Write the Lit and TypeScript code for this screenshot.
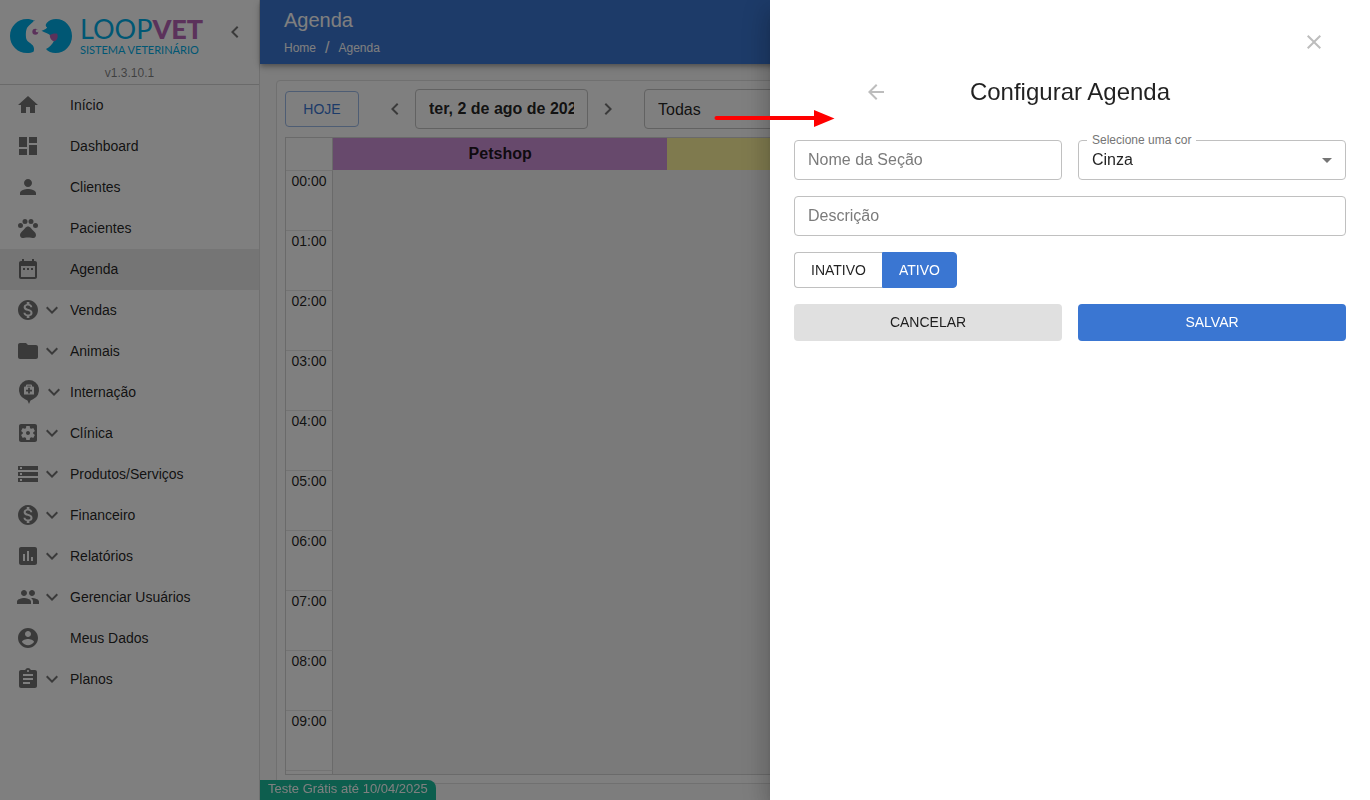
import { LitElement, html, svg, css } from "lit";
import { customElement, property, state } from "lit/decorators.js";
import { classMap } from "lit/directives/class-map.js";

const coin =
  "M12 2C6.48 2 2 6.48 2 12s4.48 10 10 10 10-4.48 10-10S17.52 2 12 2zm1.41 16.09V20h-2.67v-1.93c-1.71-.36-3.16-1.46-3.27-3.4h1.96c.1 1.05.82 1.87 2.65 1.87 1.96 0 2.4-.98 2.4-1.59 0-.83-.44-1.61-2.67-2.14-2.48-.6-4.18-1.62-4.18-3.67 0-1.72 1.39-2.84 3.11-3.21V4h2.67v1.95c1.86.45 2.79 1.86 2.85 3.39H14.3c-.05-1.11-.64-1.87-2.22-1.87-1.5 0-2.4.68-2.4 1.64 0 .84.65 1.39 2.67 1.91s4.18 1.39 4.18 3.91c-.01 1.83-1.38 2.83-3.12 3.16z";

const ICONS: Record<string, string> = {
  home: "M10 20v-6h4v6h5v-8h3L12 3 2 12h3v8z",
  dashboard: "M3 13h8V3H3v10zm0 8h8v-6H3v6zm10 0h8V11h-8v10zm0-18v6h8V3h-8z",
  person:
    "M12 12c2.21 0 4-1.79 4-4s-1.79-4-4-4-4 1.79-4 4 1.79 4 4 4zm0 2c-2.67 0-8 1.34-8 4v2h16v-2c0-2.66-5.33-4-8-4z",
  pets:
    "M2 9.5a2.5 2.5 0 1 0 5 0a2.5 2.5 0 1 0-5 0M6.5 5.5a2.5 2.5 0 1 0 5 0a2.5 2.5 0 1 0-5 0M12.5 5.5a2.5 2.5 0 1 0 5 0a2.5 2.5 0 1 0-5 0M17 9.5a2.5 2.5 0 1 0 5 0a2.5 2.5 0 1 0-5 0M17.34 14.86c-.87-1.02-1.6-1.89-2.48-2.91-.46-.54-1.05-1.08-1.75-1.32-.11-.04-.22-.07-.33-.09-.25-.04-.52-.04-.78-.04s-.53 0-.79.05c-.11.02-.22.05-.33.09-.7.24-1.28.78-1.75 1.32-.87 1.02-1.6 1.89-2.48 2.91-1.31 1.31-2.92 2.76-2.62 4.79.29 1.02 1.02 2.03 2.33 2.32.73.15 3.06-.44 5.54-.44h.18c2.48 0 4.81.58 5.54.44 1.31-.29 2.04-1.31 2.33-2.32.31-2.04-1.3-3.49-2.61-4.8z",
  calendar:
    "M9 11H7v2h2v-2zm4 0h-2v2h2v-2zm4 0h-2v2h2v-2zm2-7h-1V2h-2v2H8V2H6v2H5c-1.11 0-1.99.9-1.99 2L3 20c0 1.1.89 2 2 2h14c1.1 0 2-.9 2-2V6c0-1.1-.9-2-2-2zm0 16H5V9h14v11z",
  coin,
  folder:
    "M10 4H4c-1.1 0-1.99.9-1.99 2L2 18c0 1.1.9 2 2 2h16c1.1 0 2-.9 2-2V8c0-1.1-.9-2-2-2h-8l-2-2z",
  settings:
    "M12 10c-1.1 0-2 .9-2 2s.9 2 2 2 2-.9 2-2-.9-2-2-2zm7-7H5c-1.11 0-2 .9-2 2v14c0 1.1.89 2 2 2h14c1.11 0 2-.9 2-2V5c0-1.1-.89-2-2-2zm-1.75 9c0 .23-.02.46-.05.68l1.48 1.16c.13.11.17.3.08.45l-1.4 2.42c-.09.15-.27.21-.43.15l-1.74-.7c-.36.28-.76.51-1.18.69l-.26 1.85c-.03.17-.18.3-.35.3h-2.8c-.17 0-.32-.13-.35-.29l-.26-1.85c-.43-.18-.82-.41-1.18-.69l-1.74.7c-.16.06-.34 0-.43-.15l-1.4-2.42c-.09-.15-.05-.34.08-.45l1.48-1.16c-.03-.23-.05-.46-.05-.69s.02-.46.05-.68l-1.48-1.16c-.13-.11-.17-.3-.08-.45l1.4-2.42c.09-.15.27-.21.43-.15l1.74.7c.36-.28.76-.51 1.18-.69l.26-1.85c.03-.17.18-.3.35-.3h2.8c.17 0 .32.13.35.29l.26 1.85c.43.18.82.41 1.18.69l1.74-.7c.16-.06.34 0 .43.15l1.4 2.42c.09.15.05.34-.08.45l-1.48 1.16c.03.23.05.46.05.69z",
  storage:
    "M2 20h20v-4H2v4zm2-3h2v2H4v-2zM2 4v4h20V4H2zm4 3H4V5h2v2zm-4 7h20v-4H2v4zm2-3h2v2H4v-2z",
  report:
    "M19 3H5c-1.1 0-2 .9-2 2v14c0 1.1.9 2 2 2h14c1.1 0 2-.9 2-2V5c0-1.1-.9-2-2-2zM9 17H7v-7h2v7zm4 0h-2V7h2v10zm4 0h-2v-4h2v4z",
  people:
    "M16 11c1.66 0 2.99-1.34 2.99-3S17.66 5 16 5c-1.66 0-3 1.34-3 3s1.34 3 3 3zm-8 0c1.66 0 2.99-1.34 2.99-3S9.66 5 8 5C6.34 5 5 6.34 5 8s1.34 3 3 3zm0 2c-2.33 0-7 1.17-7 3.5V19h14v-2.5c0-2.33-4.67-3.5-7-3.5zm8 0c-.29 0-.62.02-.97.05 1.16.84 1.97 1.97 1.97 3.45V19h6v-2.5c0-2.33-4.67-3.5-7-3.5z",
  account:
    "M12 2C6.48 2 2 6.48 2 12s4.48 10 10 10 10-4.48 10-10S17.52 2 12 2zm0 3c1.66 0 3 1.34 3 3s-1.34 3-3 3-3-1.34-3-3 1.34-3 3-3zm0 14.2c-2.5 0-4.71-1.28-6-3.22.03-1.99 4-3.08 6-3.08 1.99 0 5.97 1.09 6 3.08-1.29 1.94-3.5 3.22-6 3.22z",
  clipboard:
    "M19 3h-4.18C14.4 1.84 13.3 1 12 1c-1.3 0-2.4.84-2.82 2H5c-1.1 0-2 .9-2 2v14c0 1.1.9 2 2 2h14c1.1 0 2-.9 2-2V5c0-1.1-.9-2-2-2zm-7 0c.55 0 1 .45 1 1s-.45 1-1 1-1-.45-1-1 .45-1 1-1zm2 14H7v-2h7v2zm3-4H7v-2h10v2zm0-4H7V7h10v2z",
  expand: "M16.59 8.59L12 13.17 7.41 8.59 6 10l6 6 6-6z",
  left: "M15.41 7.41L14 6l-6 6 6 6 1.41-1.41L10.83 12z",
  right: "M10 6L8.59 7.41 13.17 12l-4.58 4.59L10 18l6-6z",
  back: "M20 11H7.83l5.59-5.59L12 4l-8 8 8 8 1.41-1.41L7.83 13H20v-2z",
  close:
    "M19 6.41L17.59 5 12 10.59 6.41 5 5 6.41 10.59 12 5 17.59 6.41 19 12 13.41 17.59 19 19 17.59 13.41 12z",
  dropdown: "M7 10l5 5 5-5z",
};

@customElement("app-icon")
export class AppIcon extends LitElement {
  @property() name = "";

  static styles = css`
    :host {
      display: inline-flex;
      flex: none;
    }
    .glyph {
      display: block;
      width: 24px;
      height: 24px;
      fill: currentColor;
    }
    .glyph.pin {
      width: 26px;
      height: 26px;
    }
  `;

  render() {
    if (this.name === "pin") {
      return html`<svg class="glyph pin" viewBox="0 0 26 26" aria-hidden="true">
        ${svg`<path fill-rule="evenodd" d="M13 1a10 10 0 0 1 4 19.200L14.500 21.500 13 25l-1.500-3.500L9 20.200A10 10 0 0 1 13 1zM11 5.500a1 1 0 0 0-1 1V7.500H9a1 1 0 0 0-1 1v7h10v-7a1 1 0 0 0-1-1h-1V6.500a1 1 0 0 0-1-1zM11.200 7.500v-.8h3.600v.8zM12.100 8.800h1.800v1.900H16v1.800h-2.100v1.900h-1.800v-1.900H10v-1.800h2.100z"/>`}
      </svg>`;
    }
    return html`<svg class="glyph" viewBox="0 0 24 24" aria-hidden="true">
      ${svg`<path d=${ICONS[this.name] ?? ""} />`}
    </svg>`;
  }
}

interface NavItem {
  label: string;
  icon: string;
  group?: boolean;
}

const NAV: NavItem[] = [
  { label: "Início", icon: "home" },
  { label: "Dashboard", icon: "dashboard" },
  { label: "Clientes", icon: "person" },
  { label: "Pacientes", icon: "pets" },
  { label: "Agenda", icon: "calendar" },
  { label: "Vendas", icon: "coin", group: true },
  { label: "Animais", icon: "folder", group: true },
  { label: "Internação", icon: "pin", group: true },
  { label: "Clínica", icon: "settings", group: true },
  { label: "Produtos/Serviços", icon: "storage", group: true },
  { label: "Financeiro", icon: "coin", group: true },
  { label: "Relatórios", icon: "report", group: true },
  { label: "Gerenciar Usuários", icon: "people", group: true },
  { label: "Meus Dados", icon: "account" },
  { label: "Planos", icon: "clipboard", group: true },
];

@customElement("side-nav")
export class SideNav extends LitElement {
  @property() current = "Agenda";

  static styles = css`
    :host {
      display: block;
      box-sizing: border-box;
      background: #fff;
      border-right: 1px solid #e0e0e0;
      overflow: hidden;
    }
    .top {
      display: grid;
      grid-template-columns: 1fr 48px;
      padding: 16px 0 1px;
      border-bottom: 1px solid #d4d4d4;
    }
    .brand {
      display: flex;
      gap: 8px;
      padding-left: 10px;
      height: 47px;
    }
    .mark {
      width: 62px;
      height: 40px;
      flex: none;
    }
    .words {
      display: flex;
      flex-direction: column;
      font-family: Lato, "Liberation Sans", sans-serif;
      color: #00aee8;
      white-space: nowrap;
    }
    .name {
      font-size: 27px;
      line-height: 26px;
      font-weight: 400;
    }
    .strong {
      font-weight: 900;
      color: #b764b6;
    }
    .tag {
      font-size: 11px;
      line-height: 16px;
      font-weight: 400;
    }
    .collapse {
      border: 0;
      background: none;
      padding: 2px 0 0;
      color: rgba(0, 0, 0, 0.54);
      height: 32px;
      justify-self: center;
    }
    .version {
      grid-column: 1 / -1;
      text-align: center;
      font-size: 12px;
      line-height: 20px;
      color: rgba(0, 0, 0, 0.5);
    }
    .list {
      list-style: none;
      margin: 0;
      padding: 0;
    }
    .item {
      display: grid;
      grid-template-columns: 54px 1fr;
      align-items: center;
      box-sizing: border-box;
      height: 41px;
      padding: 0 0 1px 16px;
      font-size: 14px;
      color: rgba(0, 0, 0, 0.87);
      text-decoration: none;
    }
    .item.active {
      background: #ebebeb;
    }
    .icons {
      display: flex;
      align-items: center;
      color: rgba(0, 0, 0, 0.54);
    }
  `;

  render() {
    return html`
      <div class="top">
        <div class="brand">
          <svg class="mark" viewBox="0 0 62 40" aria-hidden="true">
            ${svg`
              <path fill="#00aee8" d="M24.700 5C22 3.500 19.500 3 17 3 7.500 3 0 10.500 0 20s7.500 17 17 17c2.600 0 5-.3 6.500-1.200 1-2 .6-4.500-.8-6.500-2.200-2.600-6.200-3.400-6.700-7.800-.3-3.500-.2-6 .7-8.800 1.500-3.600 5-4.700 8-8.700z"/>
              <path fill="#00aee8" d="M36.700 7C39 4.500 42 3 46 3c9 0 16 7.500 16 17s-7 17-16.500 17c-4 0-7.500-1.500-9.500-4 3.500-2 6.500-4.500 8-8.300L40 19c-1.500-1.600-5.500-2.600-8.500-4.300 2.200-.6 4.200-1.400 5.700-3.200-1.500-1-2.200-2.500-.5-4.500z"/>
              <circle fill="#b764b6" cx="25.300" cy="15.700" r="3"/>
              <circle fill="#fff" cx="27.200" cy="14.800" r="1.500"/>
              <path fill="#b764b6" d="M39.800 19c2-1.200 5-2 7.400-1.300 1 2.500.6 6.300-2.800 7.600-2.600-.3-4.800-3-4.600-6.300z"/>`}
          </svg>
          <div class="words">
            <span class="name">LOOP<span class="strong">VET</span></span>
            <span class="tag">SISTEMA VETERINÁRIO</span>
          </div>
        </div>
        <button class="collapse" aria-label="Recolher menu">
          <app-icon name="left"></app-icon>
        </button>
        <div class="version">v1.3.10.1</div>
      </div>
      <nav>
        <ul class="list">
          ${NAV.map(
            (n) => html`<li>
              <a
                href="#"
                class=${classMap({ item: true, active: n.label === this.current })}
              >
                <span class="icons">
                  <app-icon name=${n.icon}></app-icon>
                  ${n.group ? html`<app-icon name="expand"></app-icon>` : null}
                </span>
                <span>${n.label}</span>
              </a>
            </li>`
          )}
        </ul>
      </nav>
    `;
  }
}

// The last, unlabelled row closes the visible part of the day.
const HOURS = [...Array.from({ length: 10 }, (_, h) => `${String(h).padStart(2, "0")}:00`), ""];

@customElement("agenda-board")
export class AgendaBoard extends LitElement {
  static styles = css`
    :host {
      display: flex;
      flex-direction: column;
      box-sizing: border-box;
      gap: 8px;
      padding: 8px;
      min-height: 0;
      background: #fff;
      border: 1px solid #e0e0e0;
      border-radius: 4px;
      color: rgba(0, 0, 0, 0.87);
    }
    .toolbar {
      display: flex;
      align-items: center;
    }
    button,
    input,
    select {
      font-family: inherit;
      box-sizing: border-box;
    }
    .today {
      width: 74px;
      height: 36px;
      border: 1px solid #9cbae8;
      border-radius: 4px;
      background: none;
      color: #3a76d2;
      font-size: 14px;
    }
    .step {
      border: 0;
      background: none;
      padding: 0;
      width: 24px;
      height: 24px;
      color: rgba(0, 0, 0, 0.54);
    }
    .stepper {
      display: flex;
      align-items: center;
      gap: 8px;
      margin: 0 24px;
    }
    .date {
      width: 173px;
      height: 40px;
      padding: 0 13px;
      border: 1px solid #c4c4c4;
      border-radius: 4px;
      background: none;
      font-size: 16px;
      font-weight: 700;
      color: inherit;
    }
    .filter {
      width: 240px;
      height: 40px;
      padding: 0 13px;
      border: 1px solid #c4c4c4;
      border-radius: 4px;
      background: none;
      appearance: none;
      font-size: 16px;
      color: inherit;
    }
    .viewport {
      flex: 1;
      min-height: 0;
      overflow: hidden;
      padding-right: 8px;
      border: 1px solid #d4d4d4;
    }
    .grid {
      width: 100%;
      table-layout: fixed;
      border-collapse: separate;
      border-spacing: 0;
    }
    .timecol {
      width: 47px;
    }
    .head {
      height: 32px;
      padding: 0;
      font-size: 16px;
      font-weight: 700;
    }
    .corner,
    .hour {
      border-right: 1px solid #d4d4d4;
    }
    .purple {
      background: #ce93d8;
    }
    .yellow {
      background: #fff59d;
    }
    .green {
      background: #a5d6a7;
    }
    .hour {
      height: 60px;
      box-sizing: border-box;
      padding: 1px 0 0;
      border-top: 1px solid #e6e6e6;
      font-size: 14px;
      line-height: 18px;
      font-weight: 400;
      text-align: center;
      vertical-align: top;
    }
    .slot {
      background: #f5f5f5;
      padding: 0;
    }
  `;

  render() {
    return html`
      <div class="toolbar">
        <button class="today">HOJE</button>
        <div class="stepper">
          <button class="step" aria-label="Dia anterior"><app-icon name="left"></app-icon></button>
          <input class="date" aria-label="Data" value="ter, 2 de ago de 2022" />
          <button class="step" aria-label="Próximo dia"><app-icon name="right"></app-icon></button>
        </div>
        <select class="filter" aria-label="Seção">
          <option>Todas</option>
        </select>
      </div>
      <div class="viewport">
        <table class="grid">
          <colgroup>
            <col class="timecol" />
            <col />
            <col />
            <col />
          </colgroup>
          <thead>
            <tr>
              <td class="head corner"></td>
              <th class="head purple" scope="col">Petshop</th>
              <td class="head yellow"></td>
              <td class="head green"></td>
            </tr>
          </thead>
          <tbody>
            ${HOURS.map(
              (h) => html`<tr>
                <th class="hour" scope="row">${h}</th>
                <td class="slot"></td>
                <td class="slot"></td>
                <td class="slot"></td>
              </tr>`
            )}
          </tbody>
        </table>
      </div>
    `;
  }
}

@customElement("section-drawer")
export class SectionDrawer extends LitElement {
  @state() private enabled = true;

  static styles = css`
    :host {
      display: block;
      box-sizing: border-box;
      padding: 24px;
      background: #fff;
      color: rgba(0, 0, 0, 0.87);
      box-shadow: 0 8px 10px -5px rgba(0, 0, 0, 0.2), 0 16px 24px 2px rgba(0, 0, 0, 0.14),
        0 6px 30px 5px rgba(0, 0, 0, 0.12);
    }
    button,
    input,
    select {
      font-family: inherit;
      box-sizing: border-box;
    }
    .bar {
      display: flex;
      justify-content: flex-end;
      padding: 6px 20px 20px 0;
    }
    .tool {
      display: flex;
      border: 0;
      padding: 0;
      background: none;
      color: #bdbdbd;
    }
    .heading {
      display: grid;
      grid-template-columns: 1fr auto 1fr;
      column-gap: 12px;
      align-items: center;
      justify-items: center;
      margin-bottom: 30px;
    }
    .title {
      margin: 0;
      font-size: 24px;
      line-height: 36px;
      font-weight: 400;
    }
    .form {
      display: grid;
      grid-template-columns: 1fr 1fr;
      gap: 16px;
    }
    .field {
      position: relative;
      display: flex;
      align-items: center;
      height: 40px;
    }
    .wide {
      grid-column: 1 / -1;
    }
    .box {
      width: 100%;
      height: 40px;
      padding: 0 13px;
      border: 1px solid #c0c0c0;
      border-radius: 4px;
      background: none;
      appearance: none;
      font-size: 16px;
      color: inherit;
    }
    select.box {
      padding-bottom: 2px;
    }
    .box::placeholder {
      color: #7b7b7b;
      opacity: 1;
    }
    .float {
      position: absolute;
      top: -8px;
      left: 9px;
      padding: 0 5px;
      background: #fff;
      font-size: 12px;
      line-height: 16px;
      color: #757575;
    }
    .caret {
      position: absolute;
      right: 7px;
      color: #757575;
      pointer-events: none;
    }
    .toggle {
      display: flex;
    }
    .choice {
      height: 36px;
      padding: 0 16px;
      border: 1px solid #c0c0c0;
      background: #fff;
      color: inherit;
      font-size: 14px;
    }
    .choice:first-child {
      border-right: 0;
      border-radius: 4px 0 0 4px;
    }
    .choice:last-child {
      border-radius: 0 4px 4px 0;
    }
    .choice.on {
      background: #3a76d2;
      border-color: #3a76d2;
      color: #fff;
    }
    .action {
      height: 37px;
      padding: 0 0 2px;
      border: 0;
      border-radius: 4px;
      background: #e0e0e0;
      color: inherit;
      font-size: 14px;
    }
    .primary {
      background: #3a76d2;
      color: #fff;
    }
  `;

  render() {
    return html`
      <div class="bar">
        <button class="tool" aria-label="Fechar"><app-icon name="close"></app-icon></button>
      </div>
      <div class="heading">
        <button class="tool" aria-label="Voltar"><app-icon name="back"></app-icon></button>
        <h2 class="title">Configurar Agenda</h2>
      </div>
      <form class="form" @submit=${(e: Event) => e.preventDefault()}>
        <div class="field">
          <input class="box" id="nome" aria-label="Nome da Seção" placeholder="Nome da Seção" />
        </div>
        <div class="field">
          <select class="box" id="cor">
            <option>Cinza</option>
          </select>
          <label class="float" for="cor">Selecione uma cor</label>
          <app-icon class="caret" name="dropdown"></app-icon>
        </div>
        <div class="field wide">
          <input class="box" id="descricao" aria-label="Descrição" placeholder="Descrição" />
        </div>
        <div class="toggle wide" role="group" aria-label="Situação">
          <button
            type="button"
            class=${classMap({ choice: true, on: !this.enabled })}
            aria-pressed=${String(!this.enabled)}
            @click=${() => (this.enabled = false)}
          >
            INATIVO
          </button>
          <button
            type="button"
            class=${classMap({ choice: true, on: this.enabled })}
            aria-pressed=${String(this.enabled)}
            @click=${() => (this.enabled = true)}
          >
            ATIVO
          </button>
        </div>
        <button type="button" class="action">CANCELAR</button>
        <button type="submit" class="action primary">SALVAR</button>
      </form>
    `;
  }
}

@customElement("app-root")
export class AppRoot extends LitElement {
  static styles = css`
    :host {
      display: grid;
      grid-template-columns: 260px minmax(0, 1fr);
      height: 100vh;
      overflow: hidden;
      background: #fafafa;
      font-family: "Liberation Sans", Arial, sans-serif;
    }
    .main {
      display: flex;
      flex-direction: column;
      min-height: 0;
    }
    .header {
      display: flex;
      flex-direction: column;
      box-sizing: border-box;
      height: 64px;
      padding: 8px 24px 0;
      background: #3a76d2;
      color: #fff;
      box-shadow: 0 2px 4px -1px rgba(0, 0, 0, 0.2), 0 4px 5px rgba(0, 0, 0, 0.14),
        0 1px 10px rgba(0, 0, 0, 0.12);
    }
    .page {
      margin: 0;
      font-size: 20px;
      line-height: 24px;
      font-weight: 400;
    }
    .crumbs {
      display: flex;
      align-items: center;
      gap: 9px;
      height: 32px;
      line-height: 24px;
      font-size: 12px;
    }
    .crumb {
      color: inherit;
      text-decoration: none;
    }
    .slash {
      font-size: 16px;
      line-height: 16px;
    }
    .board {
      flex: 1;
      margin: 16px;
    }
    .trial {
      position: fixed;
      left: 260px;
      bottom: 0;
      padding: 0 8px 2px;
      border-radius: 0 8px 0 0;
      background: #1abc9c;
      color: #fff;
      font-size: 13px;
      line-height: 18px;
    }
    .backdrop {
      position: fixed;
      inset: 0;
      background: rgba(0, 0, 0, 0.5);
    }
    .drawer {
      position: fixed;
      top: 0;
      right: 0;
      bottom: 0;
      width: 600px;
    }
    .pointer {
      position: absolute;
      left: 714px;
      top: 109px;
      width: 121px;
      height: 19px;
    }
  `;

  render() {
    return html`
      <side-nav></side-nav>
      <main class="main">
        <header class="header">
          <h1 class="page">Agenda</h1>
          <div class="crumbs">
            <a class="crumb" href="#">Home</a>
            <span class="slash">/</span>
            <a class="crumb" href="#">Agenda</a>
          </div>
        </header>
        <agenda-board class="board"></agenda-board>
      </main>
      <div class="trial">Teste Grátis até 10/04/2025</div>
      <div class="backdrop"></div>
      <section-drawer class="drawer"></section-drawer>
      <svg class="pointer" viewBox="0 0 121 19" aria-hidden="true">
        ${svg`<path d="M2.500 9H102" stroke="#f00" stroke-width="4" stroke-linecap="round"/>
          <path d="M100 1v17l20.500-8.500z" fill="#f00"/>`}
      </svg>
    `;
  }
}
